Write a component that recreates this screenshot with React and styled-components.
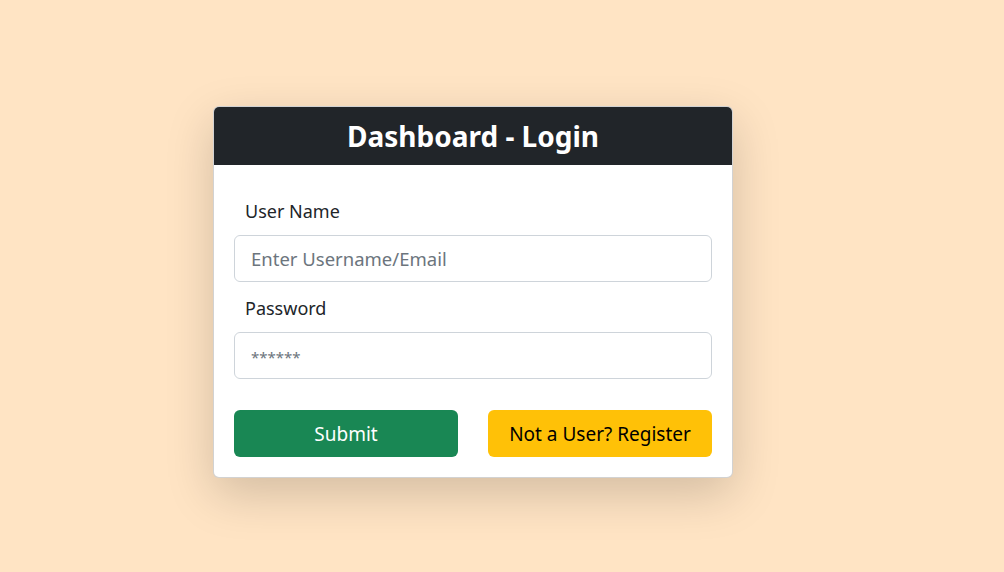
import React from "react";
import styled, { createGlobalStyle } from "styled-components";

const Global = createGlobalStyle`
  html, body { margin: 0; padding: 0; }
  body {
    background: #ffe4c4;
    font-family: "Noto Sans", "Open Sans", sans-serif;
    color: #212529;
  }
  * { box-sizing: border-box; }
`;

const Page = styled.div`
  min-height: 572px;
  padding: 106px 0 0 213px;
  display: flex;
  align-items: flex-start;
`;

const Card = styled.div`
  width: 520px;
  background: #fff;
  border: 1px solid rgba(0, 0, 0, 0.175);
  border-radius: 6px;
  box-shadow: 0 16px 48px rgba(0, 0, 0, 0.175);
  overflow: hidden;
`;

const Header = styled.div`
  height: 58px;
  background: #212529;
  color: #fff;
  display: flex;
  align-items: center;
  justify-content: center;
  font-size: 28px;
  font-weight: 700;
`;

const Body = styled.form`
  padding: 33px 20px 20px 20px;
  display: flex;
  flex-direction: column;
`;

const Label = styled.label`
  display: block;
  font-size: 18px;
  line-height: 27px;
  padding-left: 11px;
  margin-bottom: 10px;
  margin-top: ${(p) => (p.$first ? "0" : "13px")};
`;

const Input = styled.input`
  width: 100%;
  height: 47px;
  border: 1px solid #ced4da;
  border-radius: 6px;
  padding: 0 16px;
  font-family: inherit;
  font-size: 18.5px;
  color: #212529;
  outline: none;
  &::placeholder {
    color: #6c757d;
    font-size: ${(p) => (p.$masked ? "15px" : "18.5px")};
  }
`;

const Actions = styled.div`
  display: grid;
  grid-template-columns: 1fr 1fr;
  gap: 30px;
  margin-top: 31px;
`;

const Button = styled.button`
  height: 47px;
  border: none;
  border-radius: 6px;
  font-family: inherit;
  font-size: 19px;
  background: ${(p) => (p.$variant === "warning" ? "#ffc107" : "#198754")};
  color: ${(p) => (p.$variant === "warning" ? "#000" : "#fff")};
  cursor: pointer;
`;

export default function App() {
  return (
    <>
      <Global />
      <Page>
        <Card>
          <Header>Dashboard - Login</Header>
          <Body onSubmit={(e) => e.preventDefault()}>
            <Label $first>User Name</Label>
            <Input placeholder="Enter Username/Email" />
            <Label>Password</Label>
            <Input type="password" $masked placeholder="******" />
            <Actions>
              <Button type="submit">Submit</Button>
              <Button type="button" $variant="warning">Not a User? Register</Button>
            </Actions>
          </Body>
        </Card>
      </Page>
    </>
  );
}
